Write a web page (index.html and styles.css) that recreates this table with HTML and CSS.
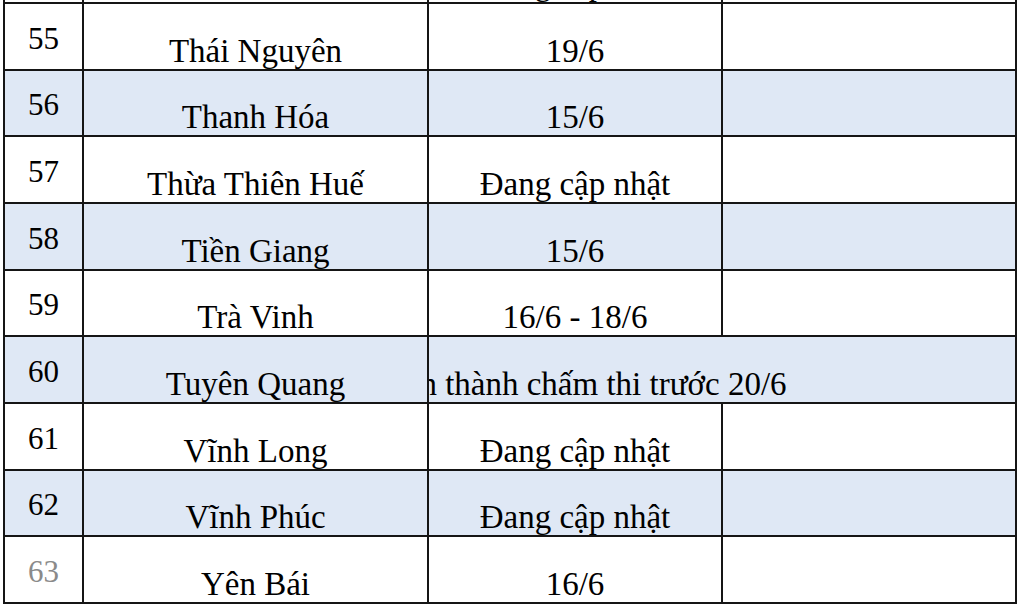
FILE: index.html
```html
<!DOCTYPE html>
<html lang="vi">
<head>
<meta charset="utf-8">
<title>Bảng</title>
<link rel="stylesheet" href="styles.css">
</head>
<body>
<div class="sheet">
<table class="grid">
<colgroup><col class="c-no"><col class="c-name"><col class="c-date"><col class="c-note"></colgroup>
<tbody>
<tr><td class="no">54</td><td class="txt">Thái Bình</td><td class="txt">Đang cập nhật</td><td></td></tr>
<tr><td class="no">55</td><td class="txt">Thái Nguyên</td><td class="txt">19/6</td><td></td></tr>
<tr class="alt"><td class="no">56</td><td class="txt">Thanh Hóa</td><td class="txt">15/6</td><td></td></tr>
<tr><td class="no">57</td><td class="txt">Thừa Thiên Huế</td><td class="txt">Đang cập nhật</td><td></td></tr>
<tr class="alt"><td class="no">58</td><td class="txt">Tiền Giang</td><td class="txt">15/6</td><td></td></tr>
<tr><td class="no">59</td><td class="txt">Trà Vinh</td><td class="txt">16/6 - 18/6</td><td></td></tr>
<tr class="alt"><td class="no">60</td><td class="txt">Tuyên Quang</td><td class="txt span" colspan="2"><div class="over"><span>Hoàn thành chấm thi trước 20/6</span></div></td></tr>
<tr><td class="no">61</td><td class="txt">Vĩnh Long</td><td class="txt">Đang cập nhật</td><td></td></tr>
<tr class="alt"><td class="no">62</td><td class="txt">Vĩnh Phúc</td><td class="txt">Đang cập nhật</td><td></td></tr>
<tr><td class="no faded">63</td><td class="txt">Yên Bái</td><td class="txt">16/6</td><td></td></tr>
</tbody>
</table>
</div>
</body>
</html>
```

FILE: styles.css
```css
html, body {
  margin: 0;
  padding: 0;
  background: #ffffff;
}
.sheet {
  width: 1020px;
  height: 611px;
  overflow: hidden;
  padding-left: 3px;
  box-sizing: border-box;
}
.grid {
  margin-top: -64.67px;
  border-collapse: collapse;
  table-layout: fixed;
  width: 1014px;
  font-family: "Liberation Serif", "Times New Roman", serif;
  color: #000000;
}
.c-no { width: 79px; }
.c-name { width: 345px; }
.c-date { width: 294px; }
.c-note { width: 294px; }
.grid td {
  border: 2px solid #151515;
  height: 66.67px;
  padding: 0;
  box-sizing: border-box;
  text-align: center;
  white-space: nowrap;
  overflow: hidden;
}
.grid tr.alt td {
  background: #dfe8f5;
}
.grid td.no {
  font-size: 31px;
  line-height: 1;
  vertical-align: middle;
  padding-top: 4px;
}
.grid td.faded {
  color: #8a8a8a;
}
.grid td.txt {
  font-size: 33px;
  line-height: 1;
  vertical-align: bottom;
  padding-bottom: 1px;
}
.over {
  width: 294px;
  display: flex;
  justify-content: center;
  white-space: nowrap;
}
```
